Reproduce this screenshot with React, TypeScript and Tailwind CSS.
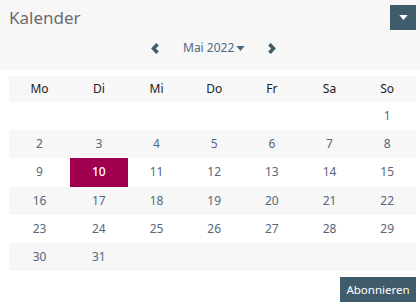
const days = ["Mo", "Di", "Mi", "Do", "Fr", "Sa", "So"];

// May 2022 starts on a Sunday
const weeks: (number | null)[][] = [
  [null, null, null, null, null, null, 1],
  [2, 3, 4, 5, 6, 7, 8],
  [9, 10, 11, 12, 13, 14, 15],
  [16, 17, 18, 19, 20, 21, 22],
  [23, 24, 25, 26, 27, 28, 29],
  [30, 31, null, null, null, null, null],
];

const Caret = ({ className }: { className?: string }) => (
  <svg viewBox="0 0 10 6" className={className} fill="currentColor">
    <path d="M0 0h10L5 6z" />
  </svg>
);

const Chevron = ({ dir }: { dir: "left" | "right" }) => (
  <svg viewBox="0 0 7 10" className="w-[8px] h-[11px]" fill="currentColor">
    {dir === "left" ? (
      <path d="M4.6 0L7 2.2 4.2 5 7 7.8 4.6 10 0 5z" />
    ) : (
      <path d="M2.4 0L0 2.2 2.8 5 0 7.8 2.4 10 7 5z" />
    )}
  </svg>
);

export default function App() {
  return (
    <div
      className="w-[420px] h-[308px] bg-white overflow-hidden"
      style={{ fontFamily: '"Noto Sans", "Open Sans", sans-serif' }}
    >
      <div className="bg-[#f7f7f7] h-[70px] flex flex-col">
        <div className="flex items-start justify-between pl-[9px] pr-[4px] pt-[5px]">
          <h2 className="text-[17px] leading-[22px] text-[#6b6b6b] pt-[2px]">Kalender</h2>
          <button className="w-[26px] h-[25px] bg-[#405c6b] flex items-center justify-center text-white">
            <Caret className="w-[9px] h-[5px]" />
          </button>
        </div>
        <div className="flex items-center mt-[9px] pl-[151px] text-[#405c6b]">
          <Chevron dir="left" />
          <span className="ml-[24px] text-[12px] text-[#4f6a80] flex items-center gap-[2px]">
            Mai 2022
            <Caret className="w-[9px] h-[5px] text-[#4f6a80]" />
          </span>
          <span className="ml-[23px]">
            <Chevron dir="right" />
          </span>
        </div>
      </div>

      <div className="ml-[9px] mr-[4px] mt-[6px]">
        <div className="grid grid-cols-[61px_repeat(6,1fr)] h-[26px] bg-[#f7f7f7] items-center text-[12px] text-[#222]">
          {days.map((d) => (
            <div key={d} className="text-center">
              {d}
            </div>
          ))}
        </div>
        {weeks.map((week, i) => (
          <div
            key={i}
            className={`grid grid-cols-[61px_repeat(6,1fr)] h-[28.2px] text-[12px] ${
              i % 2 === 1 ? "bg-[#f7f7f7]" : "bg-white"
            }`}
          >
            {week.map((n, j) => (
              <div
                key={j}
                className={`flex items-center justify-center ${
                  n === 10 ? "bg-[#a0004f] text-white font-medium" : "text-[#56677a]"
                }`}
              >
                {n ?? ""}
              </div>
            ))}
          </div>
        ))}
        <div className="flex justify-end mt-[6px]">
          <button className="h-[25px] bg-[#405c6b] text-white text-[11.5px] w-[76px]">
            Abonnieren
          </button>
        </div>
      </div>
    </div>
  );
}
